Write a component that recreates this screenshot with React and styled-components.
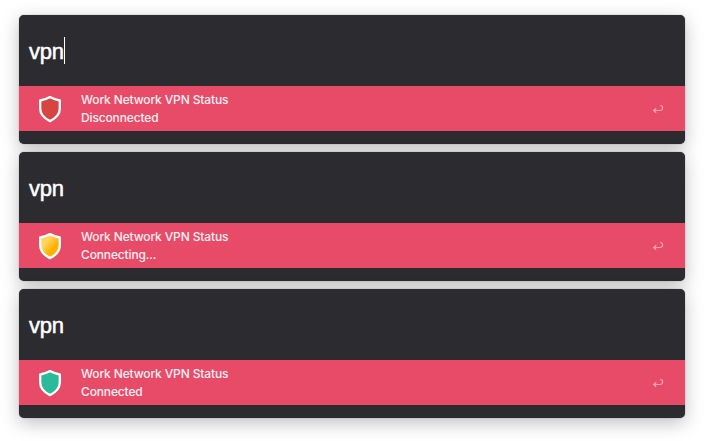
import React from "react";
import styled, { createGlobalStyle } from "styled-components";

const GlobalStyle = createGlobalStyle`
  body {
    margin: 0;
    background: #fff;
    overflow: hidden;
    font-family: Inter, "Liberation Sans", sans-serif;
  }
`;

const Stack = styled.main`
  display: flex;
  flex-direction: column;
  gap: 8px;
  box-sizing: border-box;
  height: 441px;
  padding: 15px 19px 23px;
`;

const Launcher = styled.section`
  display: flex;
  flex-direction: column;
  height: 129px;
  border-radius: 5px;
  background: #2c2b30;
  box-shadow: 0 0 1px rgba(0, 0, 0, 0.55), 0 5px 18px rgba(0, 0, 0, 0.25);
`;

const SearchField = styled.div`
  display: flex;
  align-items: center;
  box-sizing: border-box;
  height: 71px;
  padding-left: 10px;
  color: #fff;
`;

const Query = styled.span`
  padding-top: 2px;
  font-family: "Liberation Sans", sans-serif;
  font-size: 22px;
  line-height: 27px;
  letter-spacing: -0.3px;
  -webkit-text-stroke: 0.5px #fff;
`;

const Caret = styled.span`
  width: 1px;
  height: 27px;
  background: #fff;
`;

const ResultRow = styled.div`
  display: flex;
  align-items: center;
  box-sizing: border-box;
  height: 45px;
  padding: 0 21px 0 19px;
  background: #e84b67;
`;

const ShieldIcon = styled.svg`
  width: 24px;
  height: 28px;
  flex: none;
`;

const Labels = styled.div`
  flex: 1;
  margin-left: 19px;
  color: #fff0f3;
  font-size: 12px;
  font-weight: 500;
  line-height: 18px;
  letter-spacing: -0.14px;
  white-space: nowrap;
`;

const Line = styled.div``;

const ReturnIcon = styled.svg`
  width: 12px;
  height: 10px;
  flex: none;
`;

const statuses = [
  { id: "off", label: "Disconnected", from: "#d64541", to: "#d64541", active: true },
  { id: "wait", label: "Connecting...", from: "#ffd45c", to: "#ffb000" },
  { id: "on", label: "Connected", from: "#2bbb9b", to: "#2bbb9b" },
];

function Shield({ id, from, to }) {
  return (
    <ShieldIcon viewBox="0 0 24 28" aria-hidden="true">
      <defs>
        <linearGradient id={id} x1="0.15" y1="0.1" x2="0.8" y2="0.8">
          <stop offset="0.3" stopColor={from} />
          <stop offset="0.75" stopColor={to} />
        </linearGradient>
      </defs>
      <path
        d="M12 2.1C9 3.8 5.6 5 2.2 5.5V13.5C2.2 18.8 6.2 23.2 12 26.1C17.8 23.2 21.8 18.8 21.8 13.5V5.5C18.4 5 15 3.8 12 2.1Z"
        fill={`url(#${id})`}
        stroke="#fff"
        strokeWidth="2.3"
        strokeLinejoin="round"
      />
    </ShieldIcon>
  );
}

export default function App() {
  return (
    <>
      <GlobalStyle />
      <Stack>
        {statuses.map((s) => (
          <Launcher key={s.id}>
            <SearchField>
              <Query>vpn</Query>
              {s.active && <Caret />}
            </SearchField>
            <ResultRow>
              <Shield id={s.id} from={s.from} to={s.to} />
              <Labels>
                <Line>Work Network VPN Status</Line>
                <Line>{s.label}</Line>
              </Labels>
              <ReturnIcon viewBox="0 0 12 10" aria-hidden="true">
                <path
                  d="M8.2 1.5C11.4 1.5 11.4 6.5 8.2 6.5H2M4.2 4.2L1.6 6.5L4.2 8.8"
                  fill="none"
                  stroke="#f5a3b2"
                  strokeWidth="1.2"
                />
              </ReturnIcon>
            </ResultRow>
          </Launcher>
        ))}
      </Stack>
    </>
  );
}
